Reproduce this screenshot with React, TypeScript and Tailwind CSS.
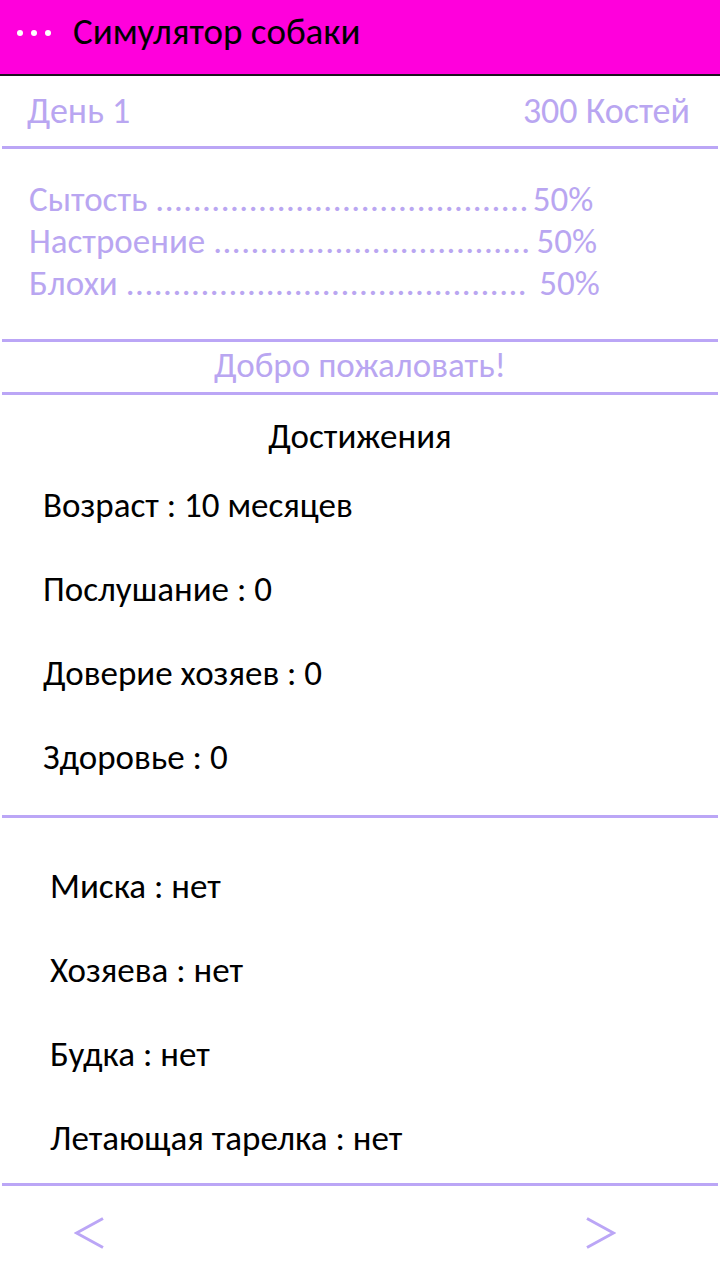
const font = "font-['Carlito','Lato','Open_Sans',sans-serif]";

const stats = [
  { label: "Сытость", dots: 40, value: "50%", gap: "ml-[4px]" },
  { label: "Настроение", dots: 34, value: "50%", gap: "ml-[6px]" },
  { label: "Блохи", dots: 43, value: "50%", gap: "ml-[12px]" },
];

const achievements = [
  "Возраст : 10 месяцев",
  "Послушание : 0",
  "Доверие хозяев : 0",
  "Здоровье : 0",
];

const items = ["Миска : нет", "Хозяева : нет", "Будка : нет", "Летающая тарелка : нет"];

function Divider() {
  return <div className="mx-[2px] h-[3px] bg-[#bba6f6]" />;
}

export default function App() {
  return (
    <div className={`w-[720px] h-[1280px] bg-white ${font} overflow-hidden`}>
      <header className="h-[76px] bg-[#ff00dc] border-b-2 border-[#1c1420] flex items-center pb-[11px]">
        <div className="flex gap-[8px] pl-[17px] pr-[22px] pt-[2px]">
          <span className="w-[6px] h-[6px] rounded-full bg-white" />
          <span className="w-[6px] h-[6px] rounded-full bg-white" />
          <span className="w-[6px] h-[6px] rounded-full bg-white" />
        </div>
        <h1 className="text-[37px] text-black leading-none">Симулятор собаки</h1>
      </header>

      <div className="h-[70px] flex items-center justify-between pl-[27px] pr-[30px] text-[36px] text-[#b9a6f1] leading-none">
        <span>День 1</span>
        <span>300 Костей</span>
      </div>

      <Divider />

      <div className="h-[190px] pt-[29px] pl-[29px] text-[35px] text-[#b9a6f1]">
        {stats.map((s) => (
          <div key={s.label} className="h-[42px] flex items-center leading-none whitespace-pre">
            <span>{s.label} </span>
            <span className="tracking-[0.5px]">{".".repeat(s.dots)}</span>
            <span className={s.gap}>{s.value}</span>
          </div>
        ))}
      </div>

      <Divider />

      <div className="h-[50px] pb-[3px] flex items-center justify-center text-[35px] text-[#b9a6f1] leading-none">
        Добро пожаловать!
      </div>

      <Divider />

      <div className="h-[420px] flex flex-col">
        <div className="h-[68px] pt-[15px] flex items-center justify-center text-[35px] text-black leading-none">
          Достижения
        </div>
        <div className="flex flex-col pl-[43px]">
          {achievements.map((a) => (
            <div key={a} className="h-[84px] flex items-center text-[35px] text-black leading-none">
              {a}
            </div>
          ))}
        </div>
      </div>

      <Divider />

      <div className="h-[365px] pt-[26px] pl-[50px] flex flex-col">
        {items.map((i) => (
          <div key={i} className="h-[84px] flex items-center text-[35px] text-black leading-none">
            {i}
          </div>
        ))}
      </div>

      <Divider />

      <div className="h-[94px] flex items-center justify-between pl-[74px] pr-[104px]">
        <svg width="30" height="32" viewBox="0 0 30 32" fill="none">
          <polyline points="29,1.5 2.5,16 29,30.5" stroke="#bba6f6" strokeWidth="3" />
        </svg>
        <svg width="30" height="32" viewBox="0 0 30 32" fill="none">
          <polyline points="1,1.5 27.5,16 1,30.5" stroke="#bba6f6" strokeWidth="3" />
        </svg>
      </div>
    </div>
  );
}
